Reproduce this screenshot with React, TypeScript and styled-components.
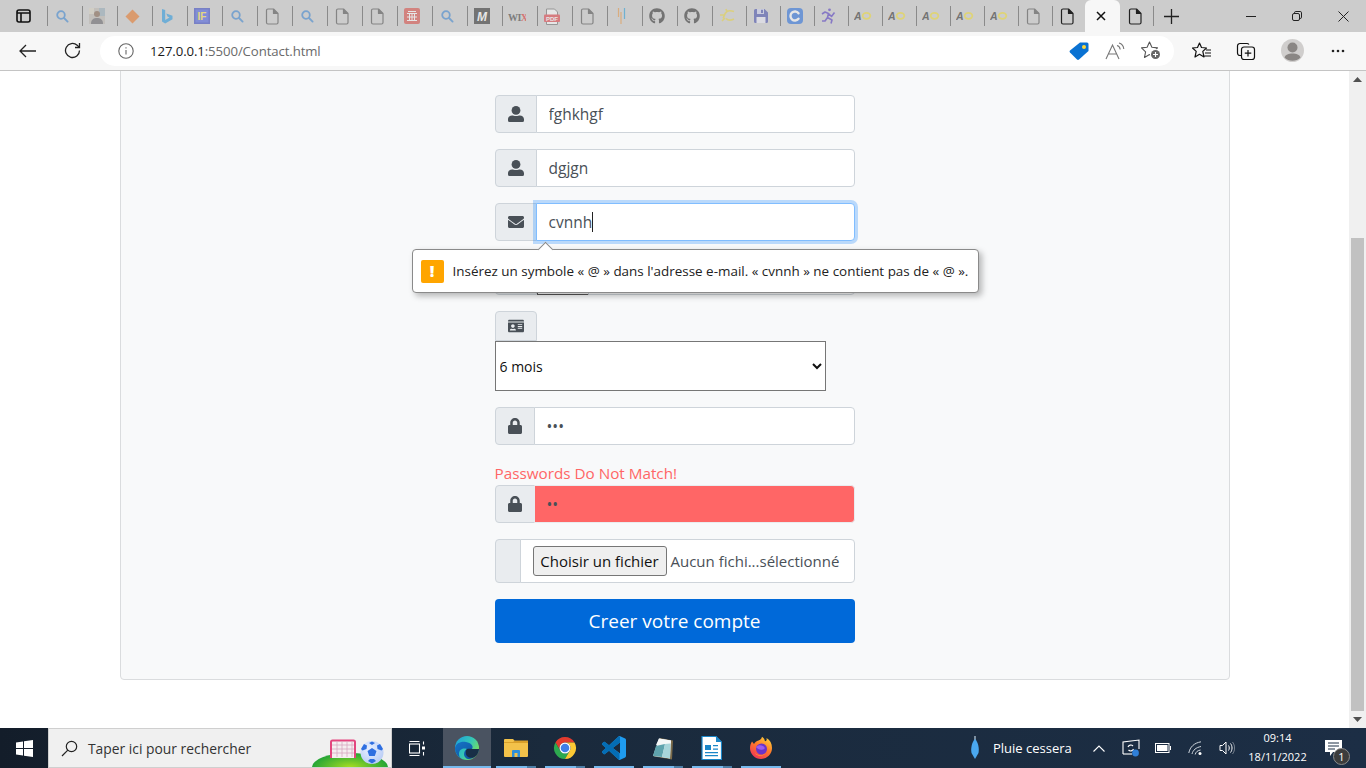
import React from "react";
import styled, { createGlobalStyle } from "styled-components";
import { FaEnvelope, FaIdCard, FaLock, FaGithub } from "react-icons/fa";

const Global = createGlobalStyle`
  html, body { margin: 0; padding: 0; height: 100%; overflow: hidden; background: #fff; }
  * { box-sizing: border-box; }
`;

const Shell = styled.div`
  width: 1366px; height: 768px; display: flex; flex-direction: column; overflow: hidden;
  font-family: "Open Sans", "Liberation Sans", sans-serif;
`;

/* ---------- tab strip ---------- */
const TabStrip = styled.div`
  height: 32px; flex: none; display: flex; align-items: center; background: #cccccc;
`;
const TabActions = styled.div`
  width: 47px; height: 32px; display: flex; align-items: center; justify-content: center; padding-right: 1px;
`;
const Tab = styled.div<{ $w: number; $dim?: boolean; $noSep?: boolean; $pr?: number }>`
  width: ${(p) => p.$w}px; height: 20px; flex: none; display: flex; align-items: center; justify-content: center;
  padding-right: ${(p) => p.$pr ?? p.$w - 29}px;
  border-left: 1px solid ${(p) => (p.$noSep ? "transparent" : "#8a8a8a")};
  & > svg { opacity: ${(p) => (p.$dim ? 0.52 : 1)}; flex: none; }
`;
const ActiveTab = styled.div`
  width: 35px; height: 32px; flex: none; display: flex; align-items: center; justify-content: center; padding-right: 4px;
  background: #f7f7f7; border-radius: 6px 6px 0 0;
`;
const WindowControls = styled.div`
  margin-left: auto; display: flex; height: 32px;
`;
const WinButton = styled.div`
  width: 46px; display: flex; align-items: center; justify-content: center;
`;

/* ---------- toolbar ---------- */
const Toolbar = styled.div`
  height: 39px; flex: none; display: flex; align-items: center; background: #f7f7f7;
  border-bottom: 1px solid #c4c4c4; padding-bottom: 1px;
`;
const NavButton = styled.div<{ $w: number }>`
  width: ${(p) => p.$w}px; height: 30px; flex: none; display: flex; align-items: center; justify-content: center;
`;
const AddressBar = styled.div`
  width: 1074px; height: 30px; flex: none; background: #fff; border-radius: 15px;
  display: flex; align-items: center; padding-left: 18px; margin-left: 12px; margin-right: 6px;
`;
const UrlText = styled.span`
  margin-left: 16px; font-size: 13.2px; color: #6a6a6a; letter-spacing: -0.1px;
  b { font-weight: 400; color: #1a1a1a; }
`;
const AddressIcons = styled.div`
  margin-left: auto; display: flex; align-items: center; gap: 16px; padding-right: 13px;
`;

/* ---------- page ---------- */
const Middle = styled.div`
  flex: 1; min-height: 0; display: flex; background: #fff;
`;
const Viewport = styled.div`
  width: 1349px; flex: none; overflow: hidden;
`;
const Card = styled.div`
  width: 1110px; margin: -20px auto 0; height: 629px; background: #f8f9fa;
  border: 1px solid #dadcde; border-radius: 4px; padding-top: 43px;
  display: flex; justify-content: center;
`;
const Form = styled.form`
  width: 360px; display: flex; flex-direction: column; gap: 16px; color: #495057; font-size: 15px;
`;
const Group = styled.div`
  display: flex; height: 38px; position: relative;
`;
const Addon = styled.div<{ $w: number }>`
  width: ${(p) => p.$w}px; flex: none; height: 100%; display: flex; align-items: center; justify-content: center;
  background: #e9ecef; border: 1px solid #ced4da; border-radius: 4px 0 0 4px; color: #495057; font-size: 16px;
`;
const Field = styled.input<{ $bad?: boolean }>`
  flex: 1; min-width: 0; height: 100%; margin-left: -1px; padding: 6px 12px; outline: none;
  border: 1px solid ${(p) => (p.$bad ? "#e9ecef" : "#ced4da")}; border-radius: 0 4px 4px 0;
  background: ${(p) => (p.$bad ? "#ff6666" : "#fff")}; color: #495057;
  font: 15.5px "Open Sans", sans-serif;
`;
const FocusField = styled.div`
  flex: 1; min-width: 0; height: 100%; margin-left: -1px; padding: 0 12px; display: flex; align-items: center;
  border: 1px solid #80bdff; border-radius: 0 4px 4px 0; background: #fff; color: #495057;
  box-shadow: 0 0 0 3px rgba(0, 123, 255, 0.25); font-size: 15.5px; position: relative;
`;
const Caret = styled.span`
  width: 1px; height: 20px; background: #222;
`;
const Bubble = styled.div`
  position: absolute; z-index: 5; left: -83px; top: 46px; width: 567px; height: 44px;
  display: flex; align-items: center; gap: 9px; padding-left: 8px;
  background: #fff; border: 1px solid #8a8a8a; border-radius: 4px; box-shadow: 3px 3px 6px rgba(0, 0, 0, 0.28);
  font-size: 13.45px; color: #222; white-space: nowrap;
  &::before {
    content: ""; position: absolute; left: 127px; top: -6px; width: 10px; height: 10px; background: #fff;
    border-left: 1px solid #8a8a8a; border-top: 1px solid #8a8a8a; transform: rotate(45deg);
  }
`;
const Warn = styled.span`
  width: 23px; height: 23px; flex: none; display: flex; align-items: center; justify-content: center;
  background: #ffa500; border-radius: 2px; color: #fff; font-weight: 800; font-size: 16px;
`;
const MiniSelect = styled.div`
  width: 52px; height: 100%; background: #fff; border: 1px solid #555;
`;
const SelectBlock = styled.div`
  display: flex; flex-direction: column; align-items: flex-start;
`;
const IdAddon = styled(Addon)`
  height: 30px; border-radius: 4px 4px 0 0;
`;
const Select = styled.select`
  width: 331px; height: 50px; background: #fff; border: 1px solid #767676; color: #111; padding-left: 0;
  font: 14px "Open Sans", sans-serif; border-radius: 0;
`;
const PasswordBlock = styled.div`
  display: flex; flex-direction: column;
`;
const Mismatch = styled.label`
  height: 24px; line-height: 24px; color: #ff6666; font-size: 15.25px;
`;
const FileGroup = styled(Group)`
  height: 44px;
`;
const FileField = styled.div`
  flex: 1; margin-left: -1px; display: flex; align-items: center; padding-left: 12px; background: #fff;
  border: 1px solid #ced4da; border-radius: 0 4px 4px 0; font-size: 15px; color: #495057; white-space: nowrap;
`;
const FileButton = styled.button`
  width: 134px; height: 30px; padding: 0; margin-right: 4px; background: #efefef; border: 1px solid #767676; border-radius: 3px;
  color: #111; font: 15px "Open Sans", sans-serif; white-space: nowrap;
`;
const Submit = styled.button`
  height: 44px; border: 0; border-radius: 4px; background: #0069d9; color: #fff;
  font: 19px "Open Sans", sans-serif; padding: 0;
`;

/* ---------- scrollbar ---------- */
const Scrollbar = styled.div`
  width: 17px; flex: none; background: #f0f0f0; display: flex; flex-direction: column; align-items: center;
`;
const ScrollArrow = styled.div`
  height: 17px; flex: none; display: flex; align-items: center; justify-content: center;
`;
const Thumb = styled.div`
  width: 13px; flex: 1; margin-top: 150px; background: #c1c1c1;
`;

/* ---------- taskbar ---------- */
const Taskbar = styled.div`
  height: 40px; flex: none; display: flex; align-items: stretch; color: #fff;
  background: linear-gradient(90deg, #131d2a 0%, #1a2a3c 40%, #1c2e45 100%);
`;
const Start = styled.div`
  width: 48px; flex: none; display: flex; align-items: center; justify-content: center;
`;
const SearchBox = styled.div`
  width: 344px; flex: none; display: flex; align-items: center; overflow: hidden; padding-left: 12px; gap: 10px;
  background: #f0f0f0; border: 1px solid #cfcfcf; color: #333; font-size: 13.85px;
`;
const SearchArt = styled.svg`
  margin-left: auto; margin-right: 3px; align-self: flex-end; flex: none;
`;
const TaskView = styled.div`
  width: 51px; flex: none; display: flex; align-items: center; justify-content: center;
`;
const App_ = styled.div<{ $active?: boolean; $stack?: boolean; $w?: number }>`
  width: ${(p) => p.$w ?? 49}px; flex: none; position: relative; display: flex; align-items: center; justify-content: center;
  background: ${(p) => (p.$active ? "#4a5361" : "transparent")};
  &::after {
    content: ""; position: absolute; bottom: 0; height: 2px;
    left: ${(p) => (p.$active ? 0 : 5)}px; right: ${(p) => (p.$active ? 0 : 4)}px;
    background: ${(p) => (p.$stack ? "linear-gradient(90deg,#76b9ed 78%,#4d7ea6 78%)" : "#76b9ed")};
  }
`;
const Tray = styled.div`
  margin-left: auto; display: flex; align-items: stretch;
`;
const Weather = styled.div`
  width: 122px; display: flex; align-items: center; padding-left: 9px; gap: 13px; font-size: 13px; white-space: nowrap;
`;
const TrayCell = styled.div<{ $w: number }>`
  width: ${(p) => p.$w}px; flex: none; display: flex; align-items: center; justify-content: center; position: relative;
`;
const Clock = styled.div`
  width: 72px; flex: none; display: flex; flex-direction: column; align-items: center; justify-content: center;
  font-size: 11px; line-height: 19px; padding-bottom: 3px; padding-left: 1px;
`;
const Badge = styled.span`
  position: absolute; right: 3px; bottom: 3px; width: 17px; height: 17px; border-radius: 50%;
  background: #3c3c3c; border: 1px solid #8a8a8a; color: #fff; font-size: 11px;
  display: flex; align-items: center; justify-content: center;
`;

/* ---------- drawings ---------- */
const UserIcon = () => (
  <svg width="16" height="16" viewBox="0 0 16 16" fill="currentColor">
    <circle cx="8" cy="4.400" r="4.400" />
    <path d="M0 14.500v-1.300C0 10.900 1.900 9.500 4.200 9.500c1 0 1.800.6 3.800.6s2.800-.6 3.800-.6c2.300 0 4.200 1.400 4.200 3.700v1.300a1.500 1.500 0 0 1-1.500 1.500h-13A1.500 1.500 0 0 1 0 14.500z" />
  </svg>
);
const Search = () => (
  <svg width="14" height="14" viewBox="0 0 14 14" fill="none" stroke="#2f7fd0" strokeWidth="1.800">
    <circle cx="6" cy="6" r="3.800" /><path d="M9 9l3.600 3.600" strokeLinecap="round" />
  </svg>
);
const Doc = ({ c = "#444" }: { c?: string }) => (
  <svg width="14" height="17" viewBox="0 0 14 17" fill="none" stroke={c} strokeWidth="1.200" strokeLinejoin="round">
    <path d="M1.500 2.500a1.500 1.500 0 0 1 1.500-1.500h5.500l4.500 4.500v9a1.500 1.500 0 0 1-1.500 1.500h-8.500a1.500 1.500 0 0 1-1.500-1.500z" />
    <path d="M8.500 1v4.500h4.500" fill={c} />
  </svg>
);
const DocDark = () => <Doc c="#222" />;
const Photo = () => (
  <svg width="16" height="16" viewBox="0 0 16 16">
    <rect width="16" height="16" fill="#b9b4ac" /><rect x="10" width="6" height="8" fill="#8fa6b5" /><rect width="5" height="6" fill="#d7d0c0" />
    <circle cx="8" cy="6" r="3" fill="#7a5a44" /><path d="M2 16c0-5 3-6 6-6s6 1 6 6z" fill="#5c5a60" />
  </svg>
);
const Diamond = () => (
  <svg width="15" height="15" viewBox="0 0 15 15"><path d="M7.500.5l7 7-7 7-7-7z" fill="#e8701a" /></svg>
);
const Bing = () => (
  <svg width="12" height="16" viewBox="0 0 12 16">
    <path d="M1 1l3.200 1.100v10l4.300-2.500-2-1-1.200-3 6.200 2.200v3.400L4.200 15.500 1 13.500z" fill="#1b93e0" />
  </svg>
);
const IF = () => (
  <svg width="16" height="16" viewBox="0 0 16 16">
    <rect width="16" height="16" fill="#2c3cc0" /><rect x="1.500" y="1.500" width="13" height="13" fill="#3f55e0" />
    <text x="8" y="12" textAnchor="middle" fontSize="10" fontWeight="800" fontFamily="Liberation Sans" fill="#ffe23a">IF</text>
  </svg>
);
const RedGrid = () => (
  <svg width="16" height="16" viewBox="0 0 16 16" fill="none" stroke="#fff" strokeWidth="1">
    <rect width="16" height="16" rx="2" fill="#d9413a" stroke="none" />
    <path d="M3 5.500h10M3 9h10M3 12.500h10M5.500 5.500v7M8 5.500v7M10.500 5.500v7M4 3.500h8" />
  </svg>
);
const MIcon = () => (
  <svg width="16" height="16" viewBox="0 0 16 16">
    <rect width="16" height="16" fill="#222" />
    <text x="8" y="12.500" textAnchor="middle" fontSize="12" fontWeight="700" fontStyle="italic" fontFamily="Liberation Sans" fill="#fff">M</text>
  </svg>
);
const Wix = () => (
  <svg width="18" height="12" viewBox="0 0 18 12">
    <text x="0" y="10.500" fontSize="10" fontWeight="700" fontFamily="Liberation Serif" fill="#333" letterSpacing="-0.6">WI<tspan fill="#d22">X</tspan></text>
  </svg>
);
const Pdf = () => (
  <svg width="16" height="17" viewBox="0 0 16 17">
    <path d="M2.500 8V1h8l3 3v4M2.500 14v2.500h11V14" fill="#fff" stroke="#666" strokeWidth="1" />
    <rect y="6.500" width="16" height="7.500" rx="1" fill="#e0323a" />
    <text x="8" y="12.500" textAnchor="middle" fontSize="6" fontWeight="800" fontFamily="Liberation Sans" fill="#fff">PDF</text>
  </svg>
);
const Lines = () => (
  <svg width="10" height="16" viewBox="0 0 10 16" strokeWidth="1.200" fill="none">
    <path d="M1.500 0v9M4 4v12" stroke="#e6923a" /><path d="M7.500 0v11" stroke="#1c9ad6" />
  </svg>
);
const Cee = () => (
  <svg width="16" height="16" viewBox="0 0 16 16" fill="none" stroke="#e8d33a" strokeWidth="1.600">
    <path d="M15 3.500c-3-1-5-1.500-7 0-3 2-3 6-4 7M15 11c-3 1.500-6 1.500-8-.5M1 7h5M3 13l3-3M7 1l1 3" />
  </svg>
);
const Save = () => (
  <svg width="16" height="16" viewBox="0 0 16 16">
    <path d="M1 2.500a1.500 1.500 0 0 1 1.500-1.500h9l3.500 3.500v9a1.500 1.500 0 0 1-1.500 1.500h-11a1.500 1.500 0 0 1-1.500-1.500z" fill="#3a43a8" />
    <rect x="4" y="1" width="7" height="5" fill="#c9cdf0" /><rect x="8" y="1.800" width="2" height="3.200" fill="#3a43a8" />
    <rect x="3.500" y="9" width="9" height="6" fill="#e9eaf7" />
  </svg>
);
const CBlue = () => (
  <svg width="16" height="16" viewBox="0 0 16 16" fill="none">
    <rect width="16" height="16" rx="4" fill="#1a66dd" />
    <path d="M11.500 5.200a4.500 4.500 0 1 0 0 5.600" stroke="#fff" strokeWidth="2.400" strokeLinecap="round" />
  </svg>
);
const Runner = () => (
  <svg width="16" height="16" viewBox="0 0 16 16" fill="none" stroke="#4a2fc0" strokeWidth="1.600" strokeLinejoin="round">
    <circle cx="8.500" cy="1.800" r="1.400" fill="#4a2fc0" stroke="none" />
    <path d="M1 6l3-2 3.500 1.500 3 3 3-4M7.500 5.500l-1 4L11 12l-1 3.500M6.500 9.500L4 13H1" />
  </svg>
);
const AO = () => (
  <svg width="18" height="10" viewBox="0 0 18 10">
    <text x="0" y="9" fontSize="10.500" fontWeight="700" fontStyle="italic" fontFamily="Liberation Sans" fill="#222">A</text>
    <ellipse cx="12.500" cy="4.800" rx="3.800" ry="3" fill="none" stroke="#f0dc2c" strokeWidth="1.800" />
  </svg>
);
const Github = () => <FaGithub size={16} color="#222" />;

const TabIcons: { w: number; el: React.ReactNode; dim?: boolean }[] = [
  ...[<Search />, <Photo />, <Diamond />, <Bing />, <IF />, <Search />, <Doc />, <Search />, <Doc />, <Doc />, <RedGrid />, <Search />, <MIcon />, <Wix />, <Pdf />, <Doc />, <Lines />, <Github />, <Github />].map((el) => ({ w: 35, el, dim: true })),
  ...[<Cee />, <Save />, <CBlue />, <Runner />, <AO />, <AO />, <AO />, <AO />, <AO />, <Doc />].map((el) => ({ w: 34, el, dim: true })),
  { w: 33, el: <DocDark /> },
];

const Browser = () => (
  <>
    <TabStrip>
      <TabActions>
        <svg width="15" height="14" viewBox="0 0 15 14" fill="none" stroke="#111" strokeWidth="1.600">
          <rect x="1" y="1" width="13" height="12" rx="2" /><path d="M5 4v9M1 4h13" />
        </svg>
      </TabActions>
      {TabIcons.map((t, i) => (
        <Tab key={i} $w={t.w} $dim={t.dim}>{t.el}</Tab>
      ))}
      <ActiveTab>
        <svg width="10" height="10" viewBox="0 0 10 10" stroke="#111" strokeWidth="1.500"><path d="M1 1l8 8M9 1l-8 8" /></svg>
      </ActiveTab>
      <Tab $w={33} $noSep $pr={5}><DocDark /></Tab>
      <Tab $w={36} $pr={0}>
        <svg width="15" height="15" viewBox="0 0 15 15" stroke="#222" strokeWidth="1.300"><path d="M7.500 0v15M0 7.500h15" /></svg>
      </Tab>
      <WindowControls>
        <WinButton><svg width="10" height="10" viewBox="0 0 10 10" stroke="#222"><path d="M0 5.500h10" /></svg></WinButton>
        <WinButton>
          <svg width="10" height="10" viewBox="0 0 10 10" fill="none" stroke="#222">
            <rect x=".5" y="2.500" width="7" height="7" rx="1.500" /><path d="M2.500 2.500V1.800a1.300 1.300 0 0 1 1.300-1.300h4.400a1.300 1.300 0 0 1 1.300 1.300v4.400a1.300 1.300 0 0 1-1.300 1.300H7.500" />
          </svg>
        </WinButton>
        <WinButton><svg width="11" height="11" viewBox="0 0 11 11" stroke="#222"><path d="M.5.5l10 10M10.500.5l-10 10" /></svg></WinButton>
      </WindowControls>
    </TabStrip>
    <Toolbar>
      <NavButton $w={56}>
        <svg width="18" height="14" viewBox="0 0 18 14" fill="none" stroke="#222" strokeWidth="1.300"><path d="M17 7H1M7 1L1 7l6 6" /></svg>
      </NavButton>
      <NavButton $w={32}>
        <svg width="17" height="17" viewBox="0 0 17 17" fill="none" stroke="#222" strokeWidth="1.300">
          <path d="M15.500 8.500a7 7 0 1 1-2.300-5.200L15.500 5.500" /><path d="M15.500 1v4.500H11" />
        </svg>
      </NavButton>
      <AddressBar>
        <svg width="16" height="16" viewBox="0 0 16 16" fill="none" stroke="#666" strokeWidth="1.100">
          <circle cx="8" cy="8" r="7.200" /><path d="M8 7v4.500M8 4.300v1.300" />
        </svg>
        <UrlText><b>127.0.0.1</b>:5500/Contact.html</UrlText>
        <AddressIcons>
          <svg width="20" height="18" viewBox="0 0 20 18">
            <path d="M11 .5h7a1.500 1.500 0 0 1 1.500 1.500v7L10 17.500a1.500 1.500 0 0 1-2 0l-7-7a1.500 1.500 0 0 1 0-2z" fill="#0a72d2" />
            <circle cx="15" cy="5" r="2" fill="#ffd83a" />
          </svg>
          <svg width="20" height="18" viewBox="0 0 20 18" fill="none" stroke="#777" strokeWidth="1.100">
            <path d="M1 17L7.500 3 14 17M3.500 12h8" /><path d="M12 3.500c2 .5 3 2 3.200 4M14 1c3 .8 4.500 3 4.800 6" />
          </svg>
          <svg width="20" height="19" viewBox="0 0 20 19" fill="none" stroke="#555" strokeWidth="1.100" strokeLinejoin="round">
            <path d="M8.500 1l2.400 5.200 5.600.7-4.100 3.900 1.100 5.600-5-2.800-5 2.800 1.100-5.600L.5 6.900l5.600-.7z" />
            <circle cx="14.500" cy="13.500" r="5.600" fill="#fff" stroke="none" />
            <circle cx="14.500" cy="13.500" r="4.500" fill="#666" stroke="none" /><path d="M14.500 11v5M12 13.500h5" stroke="#fff" />
          </svg>
        </AddressIcons>
      </AddressBar>
      <NavButton $w={44}>
        <svg width="20" height="18" viewBox="0 0 20 18" fill="none" stroke="#111" strokeWidth="1.200" strokeLinejoin="round">
          <path d="M7.500 1l2 4.500 5 .5-3.700 3.400L12 15l-4.500-2.700L3 15l1.200-5.600L.5 6l5-.5zM14 8h5M13 11h6M12.500 14h6.500" />
        </svg>
      </NavButton>
      <NavButton $w={44}>
        <svg width="20" height="20" viewBox="0 0 20 20" fill="none" stroke="#111" strokeWidth="1.200">
          <path d="M5 14.500H4a2.500 2.500 0 0 1-2.500-2.500V5A2.500 2.500 0 0 1 4 2.500h7a2.500 2.500 0 0 1 2 1" />
          <rect x="5.500" y="6" width="13" height="12.500" rx="2.500" /><path d="M12 9v6.500M8.800 12.200h6.500" />
        </svg>
      </NavButton>
      <NavButton $w={48}>
        <svg width="23" height="23" viewBox="0 0 23 23">
          <circle cx="11.500" cy="11.500" r="11.500" fill="#d0cecd" /><circle cx="11.500" cy="8.500" r="5" fill="#8a8684" />
          <path d="M3.500 18.500c1-3 4-4 8-4s7 1 8 4a11.500 11.500 0 0 1-16 0z" fill="#8a8684" />
        </svg>
      </NavButton>
      <NavButton $w={44}>
        <svg width="14" height="4" viewBox="0 0 14 4" fill="#222"><circle cx="2" cy="2" r="1.300" /><circle cx="7" cy="2" r="1.300" /><circle cx="12" cy="2" r="1.300" /></svg>
      </NavButton>
    </Toolbar>
  </>
);

const ContactForm = () => (
  <Form>
    <Group><Addon $w={42}><UserIcon /></Addon><Field readOnly value="fghkhgf" /></Group>
    <Group><Addon $w={42}><UserIcon /></Addon><Field readOnly value="dgjgn" /></Group>
    <Group>
      <Addon $w={42}><FaEnvelope /></Addon>
      <FocusField>cvnnh<Caret /></FocusField>
      <Bubble>
        <Warn>!</Warn>
        Insérez un symbole « @ » dans l'adresse e-mail. « cvnnh » ne contient pas de « @ ».
      </Bubble>
    </Group>
    <Group><Addon $w={42}><FaIdCard /></Addon><MiniSelect /><Field readOnly value="" /></Group>
    <SelectBlock>
      <IdAddon $w={42}><FaIdCard /></IdAddon>
      <Select defaultValue="6"><option value="6">6 mois</option></Select>
    </SelectBlock>
    <Group><Addon $w={40}><FaLock /></Addon><Field type="password" readOnly value="abc" /></Group>
    <PasswordBlock>
      <Mismatch>Passwords Do Not Match!</Mismatch>
      <Group><Addon $w={40}><FaLock /></Addon><Field $bad type="password" readOnly value="ab" /></Group>
    </PasswordBlock>
    <FileGroup>
      <Addon $w={26} />
      <FileField><FileButton type="button">Choisir un fichier</FileButton>Aucun fichi...sélectionné</FileField>
    </FileGroup>
    <Submit type="button">Creer votre compte</Submit>
  </Form>
);

const Edge = () => (
  <svg width="26" height="26" viewBox="0 0 26 26">
    <defs>
      <linearGradient id="eg" x1="0" y1="0" x2="1" y2="0.6"><stop offset="0" stopColor="#1b9de0" /><stop offset="0.6" stopColor="#36c8b4" /><stop offset="1" stopColor="#7be05a" /></linearGradient>
      <linearGradient id="eb" x1="0" y1="0" x2="1" y2="1"><stop offset="0" stopColor="#1673c6" /><stop offset="1" stopColor="#0c4f9a" /></linearGradient>
    </defs>
    <circle cx="13" cy="13" r="12" fill="url(#eg)" />
    <path d="M1 13C2 8 7 6 12 7c5 1 8 4 6 7h7a12 12 0 0 1-6 9c-5 2.500-9 0-9-4 0-3 2-4.500 3-5-5-1.500-8 1-8 5 0 1.500.5 3 1.500 4C3.500 21 1 17.500 1 13z" fill="url(#eb)" />
    <path d="M13 14c2-.5 5-.2 5 0h7c0 1-1 5-2.500 6.500-3 3-7 2.800-9 1-2.300-2-2.300-6-.5-7.500z" fill="#1a2a3c" opacity="0.9" />
  </svg>
);
const Folder = () => (
  <svg width="24" height="20" viewBox="0 0 24 20">
    <path d="M0 2a1 1 0 0 1 1-1h8l2 2h12a1 1 0 0 1 1 1v14a1 1 0 0 1-1 1H1a1 1 0 0 1-1-1z" fill="#f3c24a" />
    <path d="M0 4h9l2-1.500H24V5H0z" fill="#d9a02a" />
    <path d="M8 19v-6a1 1 0 0 1 1-1h6a1 1 0 0 1 1 1v6h-2.500v-4h-3v4z" fill="#2f8fd8" />
  </svg>
);
const Chrome = () => (
  <svg width="24" height="24" viewBox="0 0 24 24">
    <path d="M21.530 6.500H12A5.500 5.500 0 0 0 7.240 14.750L2.470 6.500A11 11 0 0 1 21.530 6.500z" fill="#e33b2e" />
    <path d="M2.470 6.500L7.240 14.750A5.500 5.500 0 0 0 16.760 14.750L12 23A11 11 0 0 1 2.470 6.500z" fill="#2da94f" />
    <path d="M21.530 6.500H12A5.500 5.500 0 0 1 16.760 14.750L12 23A11 11 0 0 0 21.530 6.500z" fill="#fcc934" />
    <circle cx="12" cy="12" r="5.500" fill="#fff" /><circle cx="12" cy="12" r="4.300" fill="#3f7ee8" />
  </svg>
);
const VSCode = () => (
  <svg width="24" height="24" viewBox="0 0 24 24">
    <path fill="#1f9cf0" d="M23.150 2.587L18.210.21a1.494 1.494 0 0 0-1.705.29l-9.460 8.630-4.120-3.128a.999.999 0 0 0-1.276.057L.327 7.261A1 1 0 0 0 .326 8.740L3.899 12 .326 15.260a1 1 0 0 0 .001 1.479L1.650 17.940a.999.999 0 0 0 1.276.057l4.120-3.128 9.460 8.630a1.492 1.492 0 0 0 1.704.29l4.942-2.377A1.500 1.500 0 0 0 24 20.060V3.939a1.500 1.500 0 0 0-.85-1.352zm-5.146 14.861L10.826 12l7.178-5.448v10.896z" />
    <path fill="#0065a9" d="M16.500.5l-9.460 8.630-4.120-3.128a.999.999 0 0 0-1.276.057L.327 7.261A1 1 0 0 0 .326 8.740L3.899 12 .326 15.260a1 1 0 0 0 .001 1.479L1.650 17.940a.999.999 0 0 0 1.276.057l4.120-3.128 9.460 8.630 1-.2V17.450L10.826 12l7.178-5.448V.5z" opacity="0.85" />
  </svg>
);
const Notepad = () => (
  <svg width="22" height="23" viewBox="0 0 22 23">
    <path d="M8 1l13 2.500-1 19-18-3z" fill="#7a6a4a" />
    <path d="M7 1.500l12 2L18 21.500 1 19z" fill="#e9eef0" />
    <path d="M7 1.500l12 2v3L4 8z" fill="#f5f7f7" />
    <path d="M4 9L13 7 10 20 1 19z" fill="#5fa3ad" />
    <path d="M13 7l5.500-.5L18 21.500 10 20z" fill="#a8d5da" />
  </svg>
);
const Writer = () => (
  <svg width="21" height="24" viewBox="0 0 21 24">
    <path d="M1 .5h14l5.500 5.500v17.500H1z" fill="#fff" stroke="#1a86c8" strokeWidth="1.200" />
    <path d="M15 .5v5.500h5.500z" fill="#1a86c8" />
    <path d="M4 9h6v5H4zM12 9h5v1.300h-5zM12 12.500h5v1.300h-5zM4 16h13v1.300H4zM4 19h13v1.300H4z" fill="#1a86c8" />
  </svg>
);
const Firefox = () => (
  <svg width="24" height="24" viewBox="0 0 24 24">
    <defs><linearGradient id="ff" x1="0.8" y1="0" x2="0.2" y2="1"><stop offset="0" stopColor="#ffd43a" /><stop offset="0.45" stopColor="#ff7a2a" /><stop offset="1" stopColor="#f0305a" /></linearGradient></defs>
    <path d="M12 23A11 11 0 0 1 1 12c0-2.500.8-4.800 2-6.500L5 8c1-2 2.500-3 4.500-3.500C11 4 12.500 3 13 .8c3 2 2.500 3.500 3 4.500 2-.5 1.800-2 1.500-3.300C21 4 23 7.500 23 12A11 11 0 0 1 12 23z" fill="url(#ff)" />
    <circle cx="12.500" cy="13" r="5.500" fill="#6a34c8" /><path d="M7 11c2-2 5-2 7-1 2 1 2.500 3 0 3.500-3 .5-5 0-7-2.500z" fill="#9a5cf0" />
    <path d="M6 17c3 3 8 3 11 0-2 3-9 4-11 0z" fill="#ffb02a" />
  </svg>
);

const Bar = () => (
  <Taskbar>
    <Start>
      <svg width="17" height="17" viewBox="0 0 17 17" fill="#fff"><path d="M0 2.400L7 1.400V8H0zM8 1.300L17 0v8H8zM0 9h7v6.600L0 14.600zM8 9h9v8l-9-1.300z" /></svg>
    </Start>
    <SearchBox>
      <svg width="17" height="17" viewBox="0 0 17 17" fill="none" stroke="#222" strokeWidth="1.200"><circle cx="10.500" cy="6.500" r="5.200" /><path d="M6.800 10.200L1 16" /></svg>
      Taper ici pour rechercher
      <SearchArt width="76" height="38" viewBox="0 0 76 38">
        <defs>
          <radialGradient id="hill" cx="0.5" cy="0.5" r="0.6"><stop offset="0" stopColor="#a6dd22" /><stop offset="1" stopColor="#0a9a3a" /></radialGradient>
          <radialGradient id="ball" cx="0.4" cy="0.35" r="0.7"><stop offset="0" stopColor="#e8f0ff" /><stop offset="1" stopColor="#b9ccf5" /></radialGradient>
        </defs>
        <ellipse cx="38" cy="38" rx="38" ry="14" fill="url(#hill)" />
        <path d="M19 29V13a1.500 1.500 0 0 1 1.500-1.500h21A1.500 1.500 0 0 1 43 13v16" fill="#f5eef0" stroke="#e3457e" strokeWidth="2" />
        <path d="M20 16h22M20 20h22M20 24h22M25 12v16M30 12v16M35 12v16M40 12v16" stroke="#d7a6c0" strokeWidth=".8" />
        <circle cx="60" cy="23.500" r="11.500" fill="url(#ball)" />
        <path d="M60 19l4.500 3-1.700 5h-5.600l-1.700-5zM52 15l3 1.500-.5 3.500-4 1.500-1.500-1.500zM68 15l-3 1.500.5 3.500 4 1.500 1.500-1.500zM56 32l2-2h4l2 2-4 2.500zM60 12.500l3 1.500-3 2-3-2z" fill="#2f6fe0" />
      </SearchArt>
    </SearchBox>
    <TaskView>
      <svg width="17" height="15" viewBox="0 0 17 15" fill="none" stroke="#fff" strokeWidth="1.100"><rect x=".5" y="3" width="10" height="9" /><path d="M.5.5h10M.5 14.500h10M14.500.5v3M14.500 11v3.500" /><rect x="13" y="5.500" width="3" height="3" fill="#fff" stroke="none" /></svg>
    </TaskView>
    <App_ $active $w={48}><Edge /></App_>
    <App_ $stack><Folder /></App_>
    <App_ $stack><Chrome /></App_>
    <App_><VSCode /></App_>
    <App_ $stack><Notepad /></App_>
    <App_ $stack><Writer /></App_>
    <App_><Firefox /></App_>
    <Tray>
      <Weather>
        <svg width="10" height="24" viewBox="0 0 10 24"><path d="M5 0v4" stroke="#9fb0c0" strokeWidth="1.500" /><path d="M5 3c3 3 4.500 9 3.500 14L5 23l-3.500-6C.5 12 2 6 5 3z" fill="#4aa8f0" /></svg>
        Pluie cessera
      </Weather>
      <TrayCell $w={32}><svg width="12" height="7" viewBox="0 0 12 7" fill="none" stroke="#fff" strokeWidth="1.100"><path d="M.5 6.500L6 1l5.500 5.500" /></svg></TrayCell>
      <TrayCell $w={32}>
        <svg width="18" height="18" viewBox="0 0 18 18" fill="none" stroke="#fff" strokeWidth="1.100"><path d="M1 15V3l16-2v9" /><path d="M1 15h9" /><path d="M6 8a3 3 0 0 1 5-1M6.500 11a3 3 0 0 0 5-1" /><circle cx="13.500" cy="14" r="3.400" fill="#2f7fd8" stroke="none" /></svg>
      </TrayCell>
      <TrayCell $w={32}><svg width="16" height="10" viewBox="0 0 16 10" fill="none" stroke="#fff"><rect x=".5" y=".5" width="13.500" height="9" /><rect x="2" y="2" width="10.500" height="6" fill="#fff" stroke="none" /><path d="M15.500 3v4" /></svg></TrayCell>
      <TrayCell $w={33}><svg width="16" height="15" viewBox="0 0 16 15" fill="none" stroke="#cfd6dd" strokeWidth="1"><path d="M.8 12C2 6 6 2 13 .8M4 13c1-4 4-6.500 9-7.500M7.200 13.500c.6-2.500 2-3.800 5.300-4.500" /><circle cx="12" cy="12.500" r="1.500" fill="#fff" stroke="none" /></svg></TrayCell>
      <TrayCell $w={29}><svg width="16" height="14" viewBox="0 0 16 14" fill="none" stroke="#fff"><path d="M1 4.500h2.500L7 1v12L3.500 9.500H1zM9.500 4.500c1 1.500 1 3.500 0 5M11.500 2.500c2 2.500 2 6.500 0 9" /><path d="M13.500 1c2.800 3.500 2.800 8.500 0 12" opacity=".4" /></svg></TrayCell>
      <Clock><span>09:14</span><span>18/11/2022</span></Clock>
      <TrayCell $w={40}>
        <svg width="17" height="17" viewBox="0 0 17 17" fill="#fff"><path d="M0 0h17v12H8l-3 4v-4H0z" /><path d="M3 3h11M3 6h11M3 9h7" stroke="#1c2e45" /></svg>
        <Badge>1</Badge>
      </TrayCell>
      <TrayCell $w={13} />
    </Tray>
  </Taskbar>
);

export default function App() {
  return (
    <Shell>
      <Global />
      <Browser />
      <Middle>
        <Viewport>
          <Card><ContactForm /></Card>
        </Viewport>
        <Scrollbar>
          <ScrollArrow><svg width="9" height="5" viewBox="0 0 9 5" fill="#505050"><path d="M4.500 0L9 5H0z" /></svg></ScrollArrow>
          <Thumb />
          <ScrollArrow><svg width="9" height="5" viewBox="0 0 9 5" fill="#505050"><path d="M0 0h9L4.500 5z" /></svg></ScrollArrow>
        </Scrollbar>
      </Middle>
      <Bar />
    </Shell>
  );
}
